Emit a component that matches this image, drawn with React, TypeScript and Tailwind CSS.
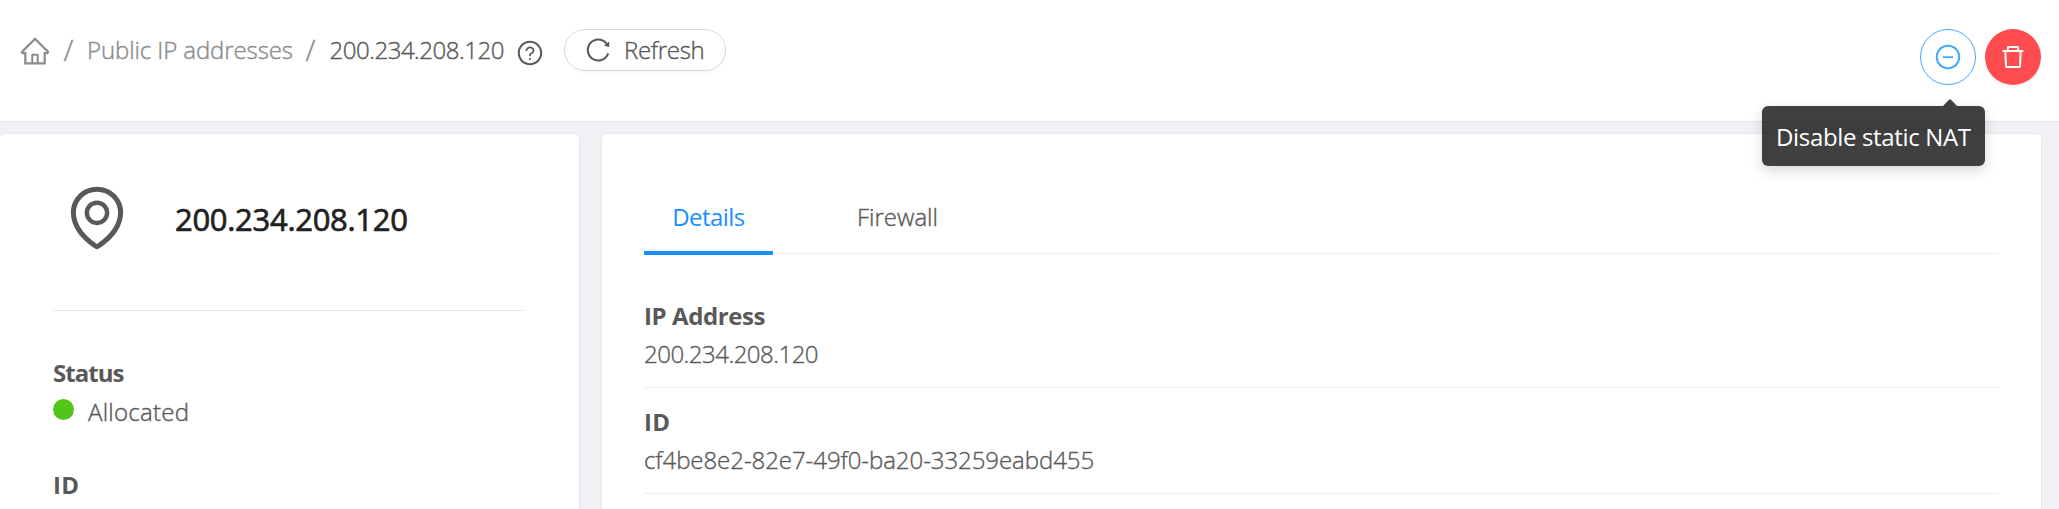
import {
  AiOutlineDelete,
  AiOutlineEnvironment,
  AiOutlineHome,
  AiOutlineMinusCircle,
  AiOutlineQuestionCircle,
  AiOutlineReload,
} from 'react-icons/ai';

function Slash() {
  return <span className="w-[35px] shrink-0 pb-px text-center text-[29px] leading-none">/</span>;
}

function Breadcrumb() {
  return (
    <nav className="flex h-[42px] items-center pl-[19px] font-light text-[#8c8c8c] [-webkit-text-stroke:0.4px]">
      <AiOutlineHome className="mt-[2px] size-8 shrink-0" />
      <Slash />
      <span className="w-[207px] pl-px tracking-[-0.1px]">Public IP addresses</span>
      <Slash />
      <span className="w-[188px] pl-[1.5px] tracking-[-0.47px] text-[#595959]">200.234.208.120</span>
      <AiOutlineQuestionCircle className="mt-[6px] size-7 shrink-0 text-[#595959]" />
      <button className="ml-5 flex h-[42px] w-[162px] items-center rounded-full border border-[#d9d9d9] bg-white pl-[19px] text-[#595959] shadow-[0_3px_0_rgba(0,0,0,0.015)]">
        <AiOutlineReload className="size-7 shrink-0" />
        <span className="ml-3 tracking-[-0.3px]">Refresh</span>
      </button>
    </nav>
  );
}

function Actions() {
  return (
    <div className="relative flex gap-[9px]">
      <button className="flex size-14 items-center justify-center rounded-full border border-[#40a9ff] bg-white text-[#40a9ff]">
        <AiOutlineMinusCircle className="size-7" />
      </button>
      <button className="flex size-14 items-center justify-center rounded-full bg-[#ff4d4f] text-white shadow-[0_3px_0_rgba(0,0,0,0.045)]">
        <AiOutlineDelete className="size-7" />
      </button>
      <div
        role="tooltip"
        className="absolute top-[77px] right-14 z-10 flex h-[60px] w-[223px] items-center rounded-[6px] bg-black/75 pt-[2px] pl-[14px] whitespace-nowrap text-white shadow-[0_5px_14px_rgba(0,0,0,0.15)]"
      >
        <svg className="absolute -top-[7px] right-[28px] h-[7px] w-[14px]" viewBox="0 0 14 7">
          <path d="M0 7 6 .8Q7-.2 8 .8L14 7Z" fill="#000" fillOpacity=".75" />
        </svg>
        <span className="tracking-[-0.34px]">Disable static NAT</span>
      </div>
    </div>
  );
}

function SummaryCard() {
  return (
    <section className="-ml-px h-[420px] w-[581px] shrink-0 rounded-[5px] border border-[#e8e8e8] bg-white pr-[54px] pl-[53px]">
      <div className="flex h-[176px] items-center pb-[8px]">
        <AiOutlineEnvironment className="mb-px ml-[7.5px] size-[72px] shrink-0" />
        <h1 className="ml-[42.5px] pt-px text-[31px] font-medium tracking-[-0.3px] text-[#222222] [-webkit-text-stroke:0.7px]">200.234.208.120</h1>
      </div>
      <div className="h-px bg-[#e8e8e8]" />
      <div className="pt-[43px]">
        <div className="h-[38px] font-bold tracking-[-0.95px]">Status</div>
        <div className="mt-px flex h-[38px] items-center font-light">
          <span className="mb-[5px] size-[21px] rounded-full bg-[#52c41a]" />
          <span className="ml-[14px] tracking-[0.25px] [-webkit-text-stroke:0.4px]">Allocated</span>
        </div>
      </div>
      <div className="pt-[35px] font-bold tracking-[0.4px]">ID</div>
    </section>
  );
}

function Detail({ label, value, labelClass, valueClass }: { label: string; value: string; labelClass: string; valueClass: string }) {
  return (
    <div className="h-[106px] border-b border-[#ededed] pt-[15px]">
      <div className={`h-[38px] font-bold ${labelClass}`}>{label}</div>
      <div className={`h-[38px] font-light [-webkit-text-stroke:0.35px] ${valueClass}`}>{value}</div>
    </div>
  );
}

function DetailCard() {
  return (
    <section className="ml-[21px] h-[420px] w-[1441px] shrink-0 rounded-[5px] border border-[#e8e8e8] bg-white px-[42px] pt-[45px]">
      <div className="flex h-[75px] border-b border-[#ededed]">
        <div className="-mb-[2px] flex w-[129px] flex-col border-b-4 border-[#1890ff] pt-[19px] text-center tracking-[-0.55px] text-[#1890ff]">
          Details
        </div>
        <div className="ml-14 w-[137px] pt-[19px] text-center font-light [-webkit-text-stroke:0.4px]">Firewall</div>
      </div>
      <div className="pt-7">
        <Detail label="IP Address" value="200.234.208.120" labelClass="tracking-[-0.4px]" valueClass="tracking-[-0.5px]" />
        <Detail label="ID" value="cf4be8e2-82e7-49f0-ba20-33259eabd455" labelClass="tracking-[0.4px]" valueClass="tracking-[-0.06px]" />
      </div>
    </section>
  );
}

export default function App() {
  return (
    <div className="h-[509px] w-[2059px] overflow-hidden bg-[#eff1f5] font-['Open_Sans',sans-serif] text-2xl leading-[38px] text-[#595959]">
      <header className="flex h-[122px] justify-between border-b border-[#e3e4e8] bg-white pt-[29px] pr-[18px]">
        <Breadcrumb />
        <Actions />
      </header>
      <main className="flex pt-[11px]">
        <SummaryCard />
        <DetailCard />
      </main>
    </div>
  );
}
